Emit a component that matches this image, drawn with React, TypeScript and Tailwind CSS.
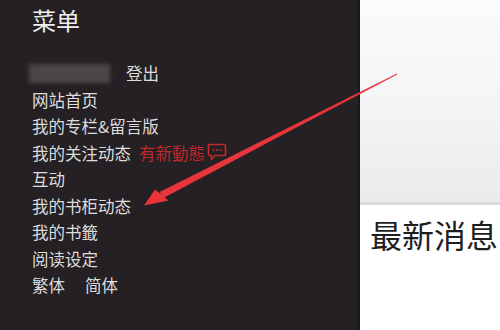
import React from 'react';

const items = ['网站首页', '我的专栏&留言版'];
const itemsAfter = ['互动', '我的书柜动态', '我的书籤', '阅读设定'];

function ChatBubble() {
  return (
    <svg width="20" height="19" viewBox="0 0 20 19" className="ml-[2px]">
      <path
        d="M2.5 1.5h15a1 1 0 0 1 1 1v9a1 1 0 0 1-1 1H8l-3.5 4v-4h-2a1 1 0 0 1-1-1v-9a1 1 0 0 1 1-1z"
        fill="none"
        stroke="#c0282b"
        strokeWidth="1.7"
        strokeLinejoin="round"
      />
      <circle cx="6.5" cy="7" r="1" fill="#c0282b" />
      <circle cx="10" cy="7" r="1" fill="#c0282b" />
      <circle cx="13.5" cy="7" r="1" fill="#c0282b" />
    </svg>
  );
}

// Red annotation arrow drawn over the screenshot
function Arrow() {
  return (
    <svg className="absolute inset-0 pointer-events-none" width="500" height="330" viewBox="0 0 500 330">
      <polygon
        points="159.6,192 279.2,132.2 396.9,73.6 397.2,74.4 280.8,135.8 163.4,198"
        fill="#e8353b"
      />
      <polygon points="144,205.5 168.5,200.5 155,189.5" fill="#ec3339" />
    </svg>
  );
}

export default function App() {
  return (
    <div
      className="relative w-[500px] h-[330px] overflow-hidden flex"
      style={{ fontFamily: '"Noto Sans CJK SC", "Noto Sans", sans-serif' }}
    >
      {/* Menu drawer */}
      <div className="w-[360px] h-full bg-[#242023] pl-[32px] text-[#dedcdd] border-r-[2px] border-[#1b181a]">
        <div className="pt-[3px] text-[24px] leading-[34px] text-[#f0eeef]">菜单</div>
        <div className="mt-[23px] text-[16.5px] leading-[26.5px]">
          <div className="flex items-center">
            <div className="ml-[-3px] w-[81px] h-[19px] bg-[#4b4649] blur-[2px]" />
            <span className="ml-[16px]">登出</span>
          </div>
          {items.map((t) => (
            <div key={t}>{t}</div>
          ))}
          <div className="flex items-center">
            <span>我的关注动态</span>
            <span className="ml-[8px] text-[#c0282b]" style={{ fontFamily: '"Noto Sans CJK TC", sans-serif' }}>
              有新動態
            </span>
            <ChatBubble />
          </div>
          {itemsAfter.map((t) => (
            <div key={t}>{t}</div>
          ))}
          <div className="flex gap-[20px]">
            <span>繁体</span>
            <span>简体</span>
          </div>
        </div>
      </div>

      {/* Page behind the drawer */}
      <div className="flex-1 flex flex-col bg-white">
        <div className="h-[205px] bg-gradient-to-b from-[#fbfbfd] via-[#f5f5f7] to-[#ebebed] border-b-[3px] border-[#dadadc]" />
        <div className="pl-[10px] pt-[8px] whitespace-nowrap text-[32px] leading-[42px] text-[#1e1e1e]">最新消息</div>
      </div>

      <Arrow />
    </div>
  );
}
